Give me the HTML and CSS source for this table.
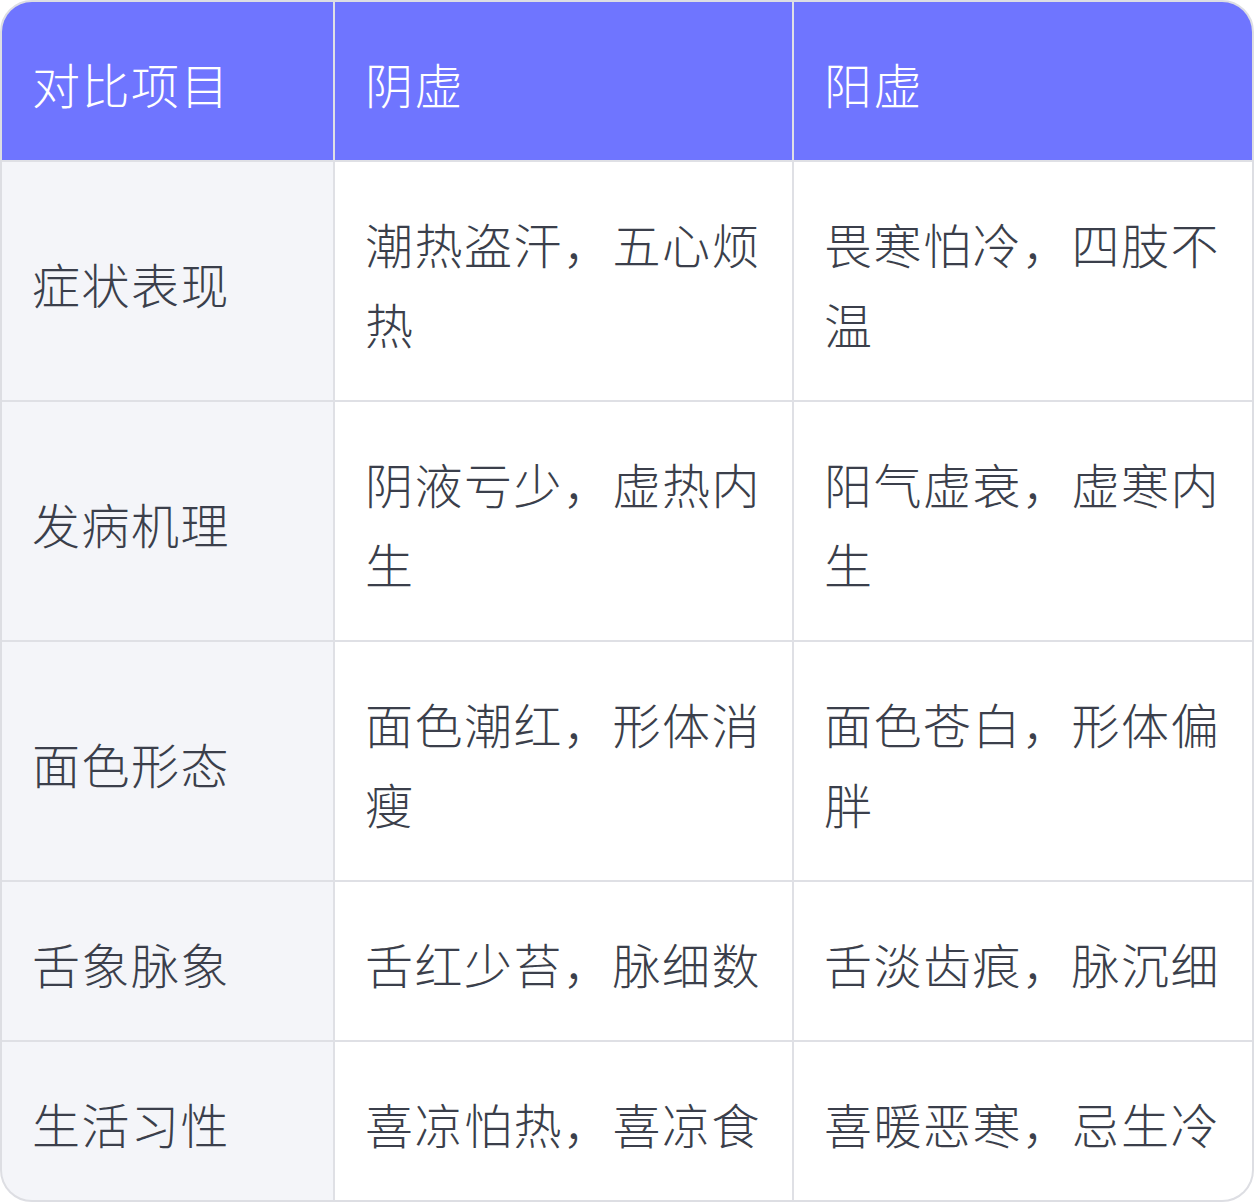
FILE: index.html
```html
<!DOCTYPE html>
<html lang="zh">
<head>
<meta charset="utf-8">
<link rel="stylesheet" href="styles.css">
</head>
<body>
<div class="table">
  <div class="cell head">对比项目</div>
  <div class="cell head">阴虚</div>
  <div class="cell head">阳虚</div>

  <div class="cell label">症状表现</div>
  <div class="cell">潮热盗汗，五心烦热</div>
  <div class="cell">畏寒怕冷，四肢不温</div>

  <div class="cell label">发病机理</div>
  <div class="cell">阴液亏少，虚热内生</div>
  <div class="cell">阳气虚衰，虚寒内生</div>

  <div class="cell label">面色形态</div>
  <div class="cell">面色潮红，形体消瘦</div>
  <div class="cell">面色苍白，形体偏胖</div>

  <div class="cell label">舌象脉象</div>
  <div class="cell">舌红少苔，脉细数</div>
  <div class="cell">舌淡齿痕，脉沉细</div>

  <div class="cell label">生活习性</div>
  <div class="cell">喜凉怕热，喜凉食</div>
  <div class="cell">喜暖恶寒，忌生冷</div>
</div>
</body>
</html>
```

FILE: styles.css
```css
html, body {
  margin: 0;
  padding: 0;
  background: #ffffff;
}

.table {
  width: 1254px;
  box-sizing: border-box;
  display: grid;
  grid-template-columns: 331px 457px 458px;
  gap: 2px;
  border: 2px solid #dddee3;
  border-radius: 32px;
  overflow: hidden;
  background: #dfe0e5;
  font-family: "Noto Sans CJK SC", "Noto Sans", sans-serif;
  font-weight: 300;
  font-size: 48px;
  letter-spacing: 1.5px;
  line-height: 80px;
  color: #3b3f4b;
}

.cell {
  background: #ffffff;
  padding: 41px 26px 37px 30px;
  display: flex;
  align-items: center;
}

.cell.head {
  background: #6f75ff;
  color: #ffffff;
}

.cell.label {
  background: #f4f5f9;
}
```
